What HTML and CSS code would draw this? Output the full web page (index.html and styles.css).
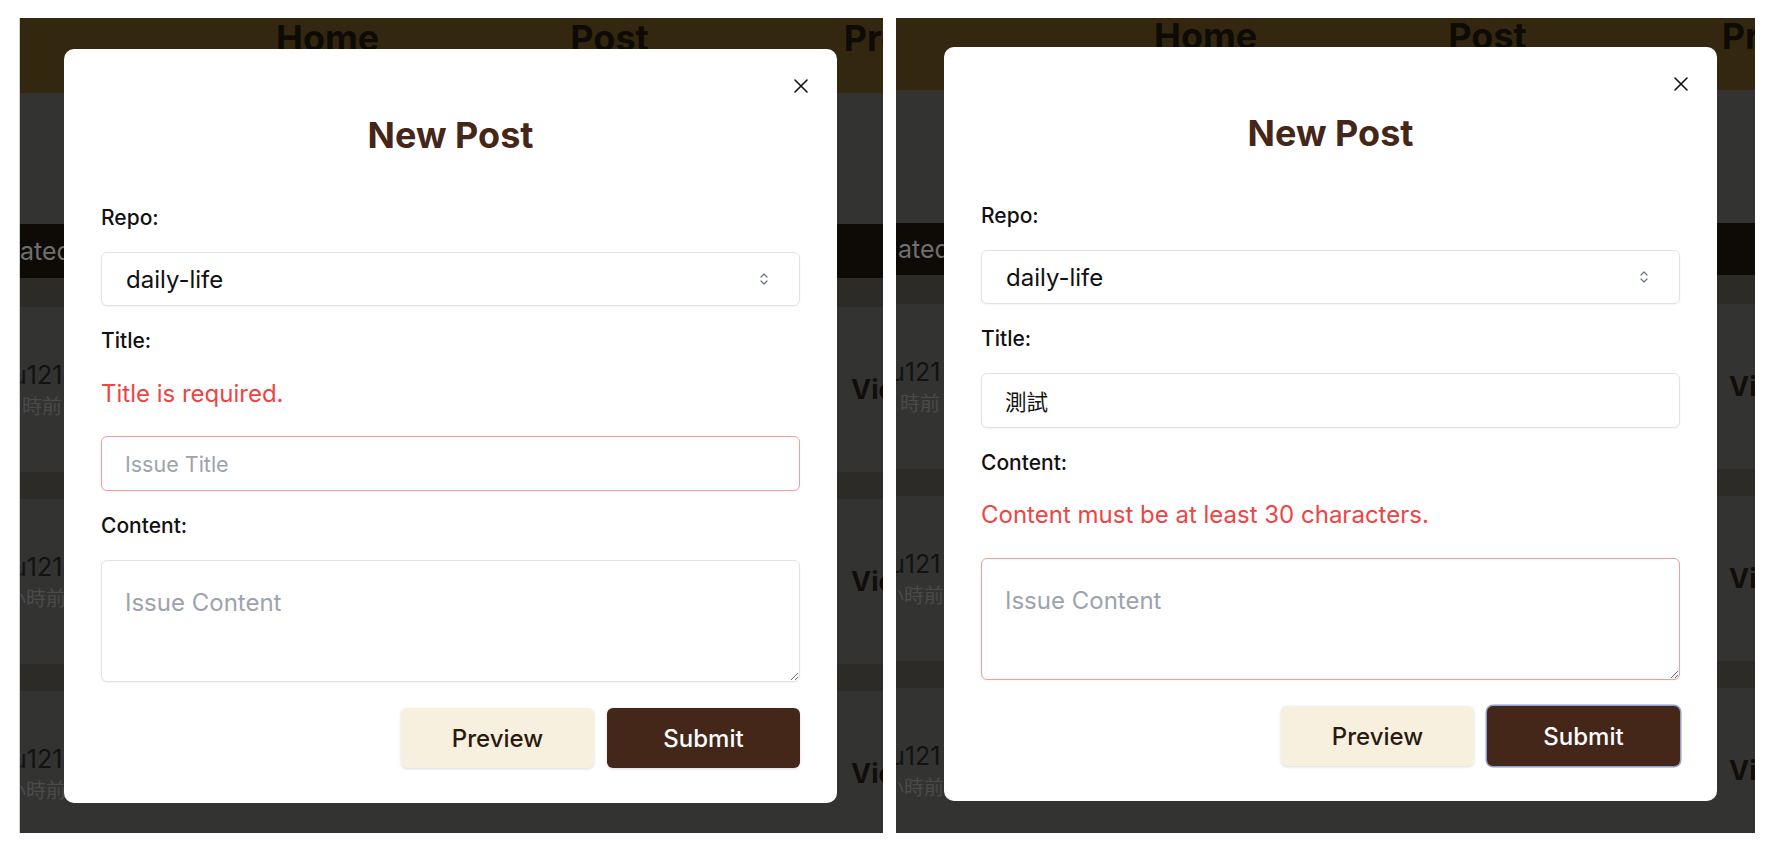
FILE: index.html
```html
<!DOCTYPE html>
<html lang="zh-Hant">
<head>
<meta charset="utf-8">
<title>New Post</title>
<link rel="stylesheet" href="styles.css">
</head>
<body>
<div class="screens">

  <section class="shot shot--a">
    <div class="page">
      <header class="nav"><span>Home</span><span>Post</span><span>Profile</span></header>
      <div class="tabbar"><span class="tab">ated</span></div>
      <div class="strip"></div>
      <div class="row"><div class="info"><span class="user">u121</span><span class="time time--short">時前</span></div><span class="view">View</span></div>
      <div class="strip"></div>
      <div class="row"><div class="info"><span class="user">u121</span><span class="time">小時前</span></div><span class="view">View</span></div>
      <div class="strip"></div>
      <div class="row"><div class="info"><span class="user">u121</span><span class="time">小時前</span></div><span class="view">View</span></div>
    </div>
    <div class="modal">
      <svg class="close" viewBox="0 0 14 14" aria-label="close"><path d="M1 1L13 13M13 1L1 13" stroke="#111" stroke-width="1.6" stroke-linecap="round"/></svg>
      <h2 class="modal-title">New Post</h2>
      <form class="form">
        <div class="field">
          <label class="label">Repo:</label>
          <div class="select-wrap">
            <select class="control select"><option>daily-life</option></select>
            <svg class="chev" viewBox="0 0 8 14"><path d="M1 5L4 2L7 5M1 9L4 12L7 9" fill="none" stroke="#6b7280" stroke-width="1.2" stroke-linecap="round" stroke-linejoin="round"/></svg>
          </div>
        </div>
        <div class="field">
          <label class="label">Title:</label>
          <p class="error">Title is required.</p>
          <input class="control input input--error" placeholder="Issue Title">
        </div>
        <div class="field">
          <label class="label">Content:</label>
          <textarea class="control textarea" placeholder="Issue Content"></textarea>
        </div>
        <div class="actions">
          <button type="button" class="btn btn--light">Preview</button>
          <button type="button" class="btn btn--dark">Submit</button>
        </div>
      </form>
    </div>
  </section>

  <section class="shot shot--b">
    <div class="page">
      <header class="nav"><span>Home</span><span>Post</span><span>Profile</span></header>
      <div class="tabbar"><span class="tab">ated</span></div>
      <div class="strip"></div>
      <div class="row"><div class="info"><span class="user">u121</span><span class="time time--short">時前</span></div><span class="view">View</span></div>
      <div class="strip"></div>
      <div class="row"><div class="info"><span class="user">u121</span><span class="time">小時前</span></div><span class="view">View</span></div>
      <div class="strip"></div>
      <div class="row"><div class="info"><span class="user">u121</span><span class="time">小時前</span></div><span class="view">View</span></div>
    </div>
    <div class="modal">
      <svg class="close" viewBox="0 0 14 14" aria-label="close"><path d="M1 1L13 13M13 1L1 13" stroke="#111" stroke-width="1.6" stroke-linecap="round"/></svg>
      <h2 class="modal-title">New Post</h2>
      <form class="form">
        <div class="field">
          <label class="label">Repo:</label>
          <div class="select-wrap">
            <select class="control select"><option>daily-life</option></select>
            <svg class="chev" viewBox="0 0 8 14"><path d="M1 5L4 2L7 5M1 9L4 12L7 9" fill="none" stroke="#6b7280" stroke-width="1.2" stroke-linecap="round" stroke-linejoin="round"/></svg>
          </div>
        </div>
        <div class="field">
          <label class="label">Title:</label>
          <input class="control input" value="測試">
        </div>
        <div class="field">
          <label class="label">Content:</label>
          <p class="error error--tight">Content must be at least 30 characters.</p>
          <textarea class="control textarea input--error" placeholder="Issue Content"></textarea>
        </div>
        <div class="actions">
          <button type="button" class="btn btn--light">Preview</button>
          <button type="button" class="btn btn--dark btn--focus">Submit</button>
        </div>
      </form>
    </div>
  </section>

</div>
</body>
</html>
```

FILE: styles.css
```css
* { box-sizing: border-box; }

body {
  margin: 0;
  background: #ffffff;
  font-family: Inter, "Noto Sans", "Noto Sans CJK TC", sans-serif;
}

.screens {
  display: flex;
  gap: 13px;
  padding: 18px 0 0 19px;
}

.shot {
  position: relative;
  overflow: hidden;
  height: 815px;
  background: #333332;
}
.shot--a { width: 864px; border-left: 1px solid #cfcfcf; }
.shot--b { width: 859px; }

/* dimmed page behind the dialog */
.page {
  width: 920px;
  margin-left: -8px;
}
.shot--b .page { margin-left: -6px; }

.nav {
  height: 75px;
  background: #33280f;
  display: flex;
  gap: 191px;
  padding-left: 264px;
  font-size: 36px;
  font-weight: 700;
  line-height: 40px;
  color: #0e0b06;
}
.nav span:last-child { margin-left: 4px; }
.shot--b .nav { height: 72px; line-height: 36px; }

.tabbar {
  margin-top: 131px;
  height: 54px;
  background: #0e0a06;
  display: flex;
  align-items: center;
}
.shot--b .tabbar { margin-top: 133px; height: 52px; }
.tab {
  padding-left: 8px;
  font-size: 25px;
  color: #6f6f6f;
}

.strip {
  height: 27px;
  background: #2d2b27;
}
.tabbar + .strip { height: 29px; }

.row {
  height: 165px;
  display: grid;
  grid-template-columns: 839px auto;
  align-items: center;
}
.info {
  display: flex;
  flex-direction: column;
}
.user {
  font-size: 25px;
  line-height: 32px;
  color: #121212;
}
.time {
  margin-left: -6px;
  font-family: "Noto Sans CJK TC", sans-serif;
  font-size: 20px;
  line-height: 30px;
  color: #4a4a4a;
}
.time--short { margin-left: 10px; }
.view {
  font-size: 27px;
  font-weight: 700;
  color: #120d09;
  white-space: nowrap;
}

/* dialog */
.modal {
  position: absolute;
  top: 31px;
  left: 44px;
  width: 773px;
  background: #ffffff;
  border-radius: 10px;
  padding: 64px 37px 35px;
}
.shot--b .modal { top: 29px; left: 48px; }

.close {
  position: absolute;
  top: 30px;
  right: 29px;
  width: 14px;
  height: 14px;
}

.modal-title {
  margin: 0;
  text-align: center;
  font-size: 36px;
  line-height: 44px;
  font-weight: 700;
  color: #45271a;
}

.form {
  margin-top: 49px;
  display: flex;
  flex-direction: column;
  gap: 23px;
}

.field {
  display: flex;
  flex-direction: column;
  gap: 22px;
}

.label {
  font-size: 21px;
  line-height: 24px;
  font-weight: 500;
  color: #111111;
}

.error {
  margin: 5px 0 6px;
  font-size: 24px;
  line-height: 28px;
  color: #ef4444;
}
.error--tight { margin-top: 4px; margin-bottom: 7px; }

.control {
  width: 100%;
  border: 1px solid #e2e2e2;
  border-radius: 6px;
  background: #ffffff;
  box-shadow: 0 1px 2px rgba(0, 0, 0, 0.05);
  font-family: Inter, "Noto Sans CJK TC", sans-serif;
  color: #111111;
  outline: none;
}

.select-wrap { position: relative; }
.select {
  appearance: none;
  -webkit-appearance: none;
  height: 54px;
  padding: 0 24px;
  font-size: 24px;
}
.chev {
  position: absolute;
  right: 32px;
  top: 20px;
  width: 8px;
  height: 14px;
}

.input {
  height: 55px;
  padding: 0 23px;
  font-size: 21.5px;
}
.input::placeholder,
.textarea::placeholder { color: #9ca3af; }

.textarea {
  display: block;
  height: 122px;
  padding: 25px 23px 20px;
  font-size: 24px;
  line-height: 34px;
  resize: vertical;
}

.input--error { border-color: #f59b9b; }

.actions {
  margin-top: 3px;
  display: flex;
  justify-content: flex-end;
  gap: 13px;
}

.btn {
  width: 193px;
  height: 60px;
  border: 0;
  border-radius: 6px;
  font-family: Inter, sans-serif;
  font-size: 24px;
  font-weight: 500;
  box-shadow: 0 1px 3px rgba(0, 0, 0, 0.15);
}
.btn--light { background: #f8f0df; color: #2a1a10; }
.btn--dark { background: #45271a; color: #ffffff; }
.btn--focus { box-shadow: 0 0 0 1.5px #8da0d6; }
```
